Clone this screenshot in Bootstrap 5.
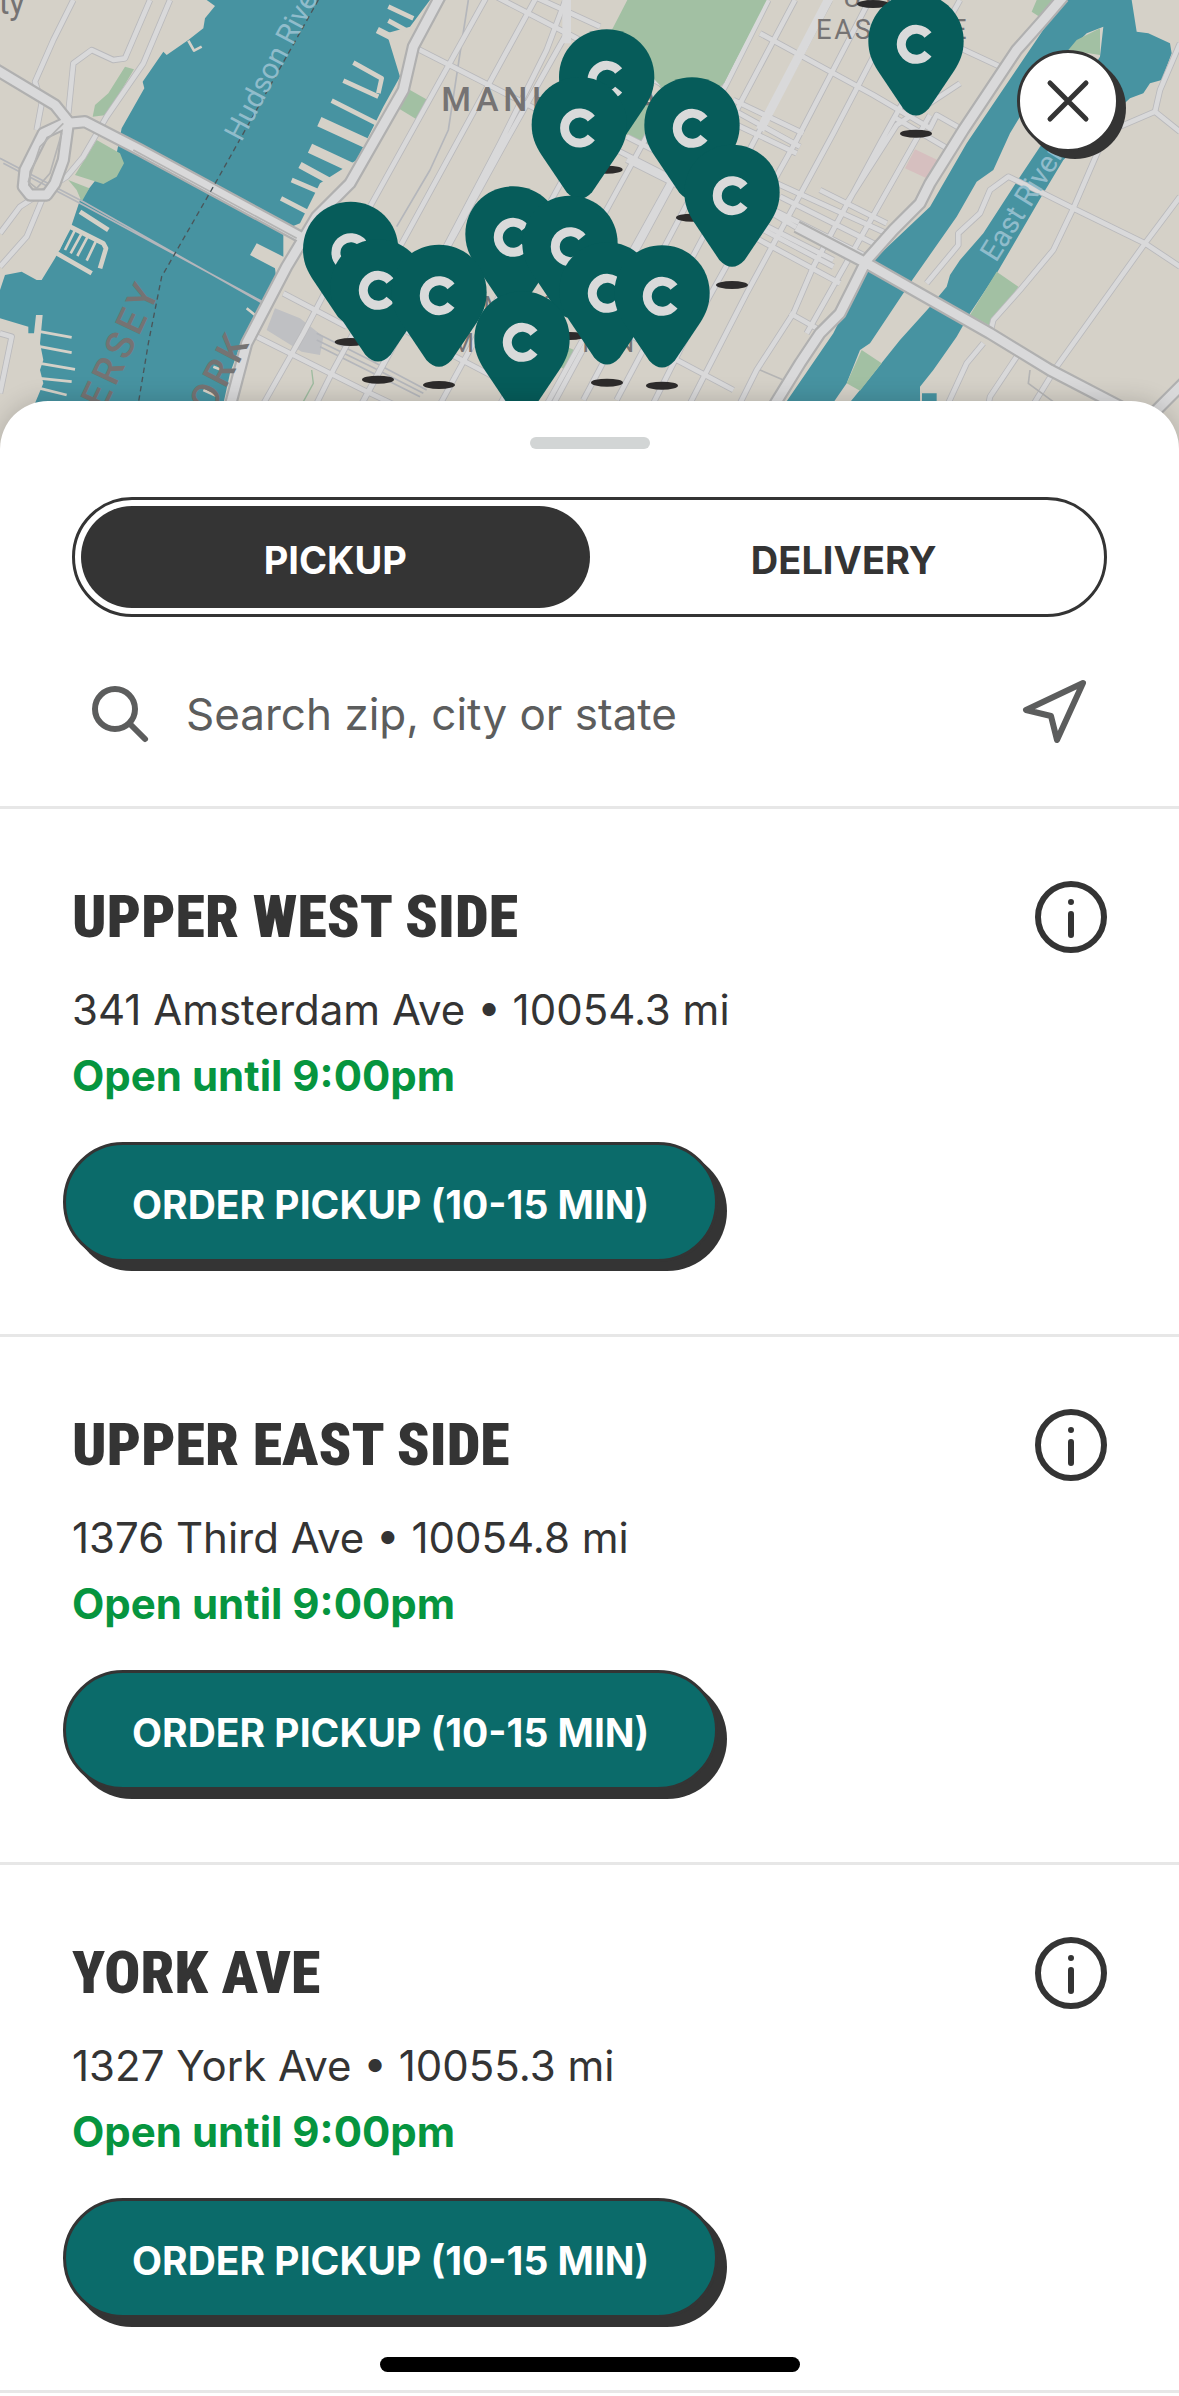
<!DOCTYPE html>
<html lang="en">
<head>
<meta charset="utf-8">
<meta name="viewport" content="width=device-width, initial-scale=1">
<title>Choose a location</title>
<link rel="stylesheet" href="https://cdn.jsdelivr.net/npm/bootstrap@5.3.0/dist/css/bootstrap.min.css">
<style>
  :root { --ink: #343434; --teal: #0b6b6a; --pin: #065c5a; --rule: #e7e7e7; }
  body { font-family: Inter, "Liberation Sans", sans-serif; color: var(--ink); background: #fff; }
  /* map */
  .map-land { background: #d5d1c8; }
  .water { fill: #4793a1; }
  .land { fill: #d5d1c8; }
  .green { fill: #a2c0a3; }
  .casing { stroke: #b9b9bc; }
  .surface { stroke: #d9d9da; }
  .streets, .highways, .piers, .rails { fill: none; stroke-linejoin: round; }
  .streets.casing { stroke-width: 19; }
  .streets.surface { stroke-width: 14; }
  .highways.casing { stroke: #b0b0b0; stroke-width: 40; }
  .highways.surface { stroke-width: 27; }
  .piers { stroke: #d5d1c8; }
  .rails { stroke: #b4b6bb; stroke-width: 5; }
  .place { fill: #757373; font-family: Roboto, sans-serif; }
  .river { fill: #90bccb; font-family: Roboto, sans-serif; font-size: 88px; }
  .pin-body { fill: var(--pin); }
  .pin-mark { fill: none; stroke: #d9dada; stroke-width: 27; }
  .pin-shade { fill: #2d2b2b; }
  .close-btn { top: 50px; right: 60px; width: 102px; height: 102px; border: 3px solid var(--ink); background: #fff; box-shadow: 7px 7px 0 var(--ink); }
  /* sheet */
  .sheet { margin-top: -49px; padding-top: 36px; border-radius: 48px 48px 0 0; box-shadow: 0 0 24px rgba(0,0,0,.18); }
  .grabber { width: 120px; height: 12px; background: #d2d5d5; }
  .gutter { padding-left: 72px; padding-right: 72px; }
  .segments { margin-top: 48px; height: 120px; padding: 6px; border: 3px solid var(--ink); }
  .segments .btn { font-size: 38px; font-weight: 700; line-height: 48px; color: var(--ink); border: 0; padding: 6px 0 0; }
  .segments .btn.active { background: var(--ink); color: #fff; }
  .search-row { height: 192px; border-bottom: 3px solid var(--rule); padding: 4px 90px 0; gap: 36px; }
  .search-row input { font-size: 44px; line-height: 60px; color: #5c5d5d; }
  .search-row input::placeholder { color: #5c5d5d; opacity: 1; }
  .search-row svg { stroke: #5c5d5d; }
  .store { padding-top: 72px; padding-bottom: 72px; border-bottom: 3px solid var(--rule); }
  .store-name { font-family: "Roboto Condensed", Roboto, sans-serif; font-size: 60px; font-weight: 900; line-height: 72px; }
  .store-line { font-size: 42px; line-height: 66px; }
  .store-open { color: #06953f; font-weight: 700; }
  .order-btn { height: 120px; margin: 33px 0 0 -9px; padding: 5px 66px 0; border: 3px solid var(--ink); background: var(--teal); color: #fff; font-size: 39px; font-weight: 700; line-height: 48px; box-shadow: 9px 9px 0 var(--ink); }
  .order-btn:hover { background: var(--pin); color: #fff; border-color: var(--ink); }
  .home-bar { bottom: 24px; width: 420px; height: 15px; background: #000; }
</style>
<script src="https://cdn.jsdelivr.net/npm/bootstrap@5.3.0/dist/js/bootstrap.bundle.min.js"></script>
</head>
<body>
<header class="position-relative map-land">
  <svg class="d-block w-100" viewBox="0 0 3537 1350" role="img" aria-label="Map of Manhattan locations">
    <defs>
      <clipPath id="island"><path d="M1290 0H3370L3270 60 3050 390 2930 600 2840 690 2700 930 2500 1230 2400 1350H660L700 1130 850 780 960 590 1150 300Z"/></clipPath>
      <g id="grid">
        <path d="M1460-10 1110 620 910 1000 740 1300M1610-10 1200 740 1000 1110 880 1350M1700-10 1640 150 1500 430 1290 830 1010 1350M1700 100 1520 420 1240 930 1010 1350M1900 150 1300 1250M2000 300 1480 1250M2080 420 1620 1250M2305 0 2180 250 1640 1250M2385 0 1750 1200M2490 0 2280 390 1850 1200M2640-60 2390 420 2050 1030 1950 1230M2740-60 2500 400 2240 880 2060 1230M2880 0 2640 430 2440 800 2380 940 2270 1110 2210 1230M2880 250 2690 375 2540 610M2790 345 2420 1000"/>
        <path d="M1240 140 2500 780M1450-30 1720 110 2000 260 2200 390M1560-30 1800 80M850 880 1040 980M770 1010 1090 1170 1300 1270M1060 910 1500 1140M1880 410 2180 560 2540 770M1880 480 2140 610 2500 800M2280 100 2620 285 2790 385 2810 345 2880 385M2200 300 2410 400M2200 330 2400 440M2200 370 2390 460M2850 130 3000 200M2330 550 2660 700M2340 590 2640 740M2300 620 2600 770M2460 570 2660 670M2260 710 2520 850M2370 940 2450 985M2680 350 2850 450M1880 1000 2200 1170M930 1240 1100 1330"/>
      </g>
      <g id="outer">
        <path d="M220 0 160 120 105 245 125 310 110 390M450 0 375 175 340 180 275 150 220 190 205 340M510 0 430 190 320 350 250 470 200 530 60 620 0 700M130 590 80 710 0 800M0 1000 35 1010 0 1180"/>
        <path d="M2780 850 2875 735 2875 700 2940 640 2970 570 3025 530 3130 580 3220 625 3435 730 3540 800M3360 380 3465 335 3480 270 3540 130M3465 335 3540 395M3300 440 3220 625 3160 750 3060 870 2980 960 2970 1000M3540 590 3435 730 3170 1100 3090 1230M2950 1030 2900 1090 2840 1220M3050 1070 2970 1190 2960 1240"/>
      </g>
      <g id="fast">
        <path d="M-10 210 165 315 205 365 130 400 75 510 70 560 90 585 140 585 165 550 190 480 205 370 255 365 420 450 900 710 960 750M1320-10 1240 140 1210 270 1050 550 950 650 860 800 740 1030 690 1220"/>
        <path d="M3190-10 3130 60 3050 150 2970 270 2890 390 2790 550 2760 610 2680 690 2600 780 2560 860 2520 940 2460 1000 2400 1090 2320 1220M2390 680 2600 790 2970 1000 3150 1110 3400 1240M3560 1140 3440 1260"/>
      </g>
      <g id="pin">
        <ellipse class="pin-shade" cy="268" rx="48" ry="12"/>
        <path class="pin-body" d="M0-153C80-153 143-90 143-10 143 26 132 52 114 80L38 193Q0 234-38 193L-114 80C-132 52-143 26-143-10-143-90-80-153 0-153Z"/>
        <path class="pin-mark" d="M36-28A45 45 0 1 0 36 28"/>
      </g>
    </defs>

    <path class="water" d="M620 0 645 18 615 55 610 85 565 120 500 165 490 155 428 245 433 265 365 385 350 460 240 600 210 690 165 775 125 840 110 840 65 815 15 825 0 870V955L85 980V1000H102L108 945H128L120 1030 130 1080 120 1110 130 1150 105 1210V1350H640L690 1120 730 1010 785 905 828 830 825 805 750 765 770 730 850 770 850 690 900 670 960 550 1070 480 1150 320 1200 230 1160 100 1230 80 1290 0Z"/>
    <path class="water" d="M3190 0H3395L3410 95 3445 100 3510 130 3515 160 3500 200 3485 240 3450 250 3430 280 3390 295 3190 480 3130 580 2990 820 2910 940 2870 1010 2800 1110 2760 1160V1350H2260L2500 1000 2600 800 2790 620 2900 430Z"/>
    <path class="land" d="M3310 80 3260 100 3210 150 3060 350 3030 400 2980 510 2930 545 2870 650 2800 750 2730 850 2610 1030 2580 1050 2540 1150 2450 1280H2490L2580 1170 2700 1020 2790 920 2840 860 2850 825 2880 780 2950 700 3060 530 3300 170Z"/>
    <path class="water" d="M2256 0H2292L2275 35 2256 35ZM2766 1180H2810V1220H2766Z"/>
    <g class="piers">
      <path stroke-width="14" d="M1165 20 1240 55M1165 62 1235 100M1060 188 1145 235 1135 280M1030 242 1135 290M995 302 1130 370M875 540 980 585M843 595 930 640M240 635 325 690M210 680 310 730 318 745 300 805M170 760 275 820"/>
      <path stroke-width="20" d="M1132 90 1210 130M900 495 1010 555"/>
      <path stroke-width="30" d="M958 365 1100 430M930 445 1070 510"/>
      <path stroke-width="8" d="M205 685 175 750M225 690 195 750M245 700 212 760M263 710 232 768M287 725 260 782M120 995 215 1012M120 1040 215 1058M120 1090 225 1108M120 1135 215 1145M120 1165 200 1185M565 122 582 152 605 140M640 1100 665 1110M610 1170 655 1190M740 925 765 945"/>
    </g>
    <path class="green" d="M375 200 402 208 320 345 278 350 285 315 325 280ZM290 420 360 460 372 490 350 530 310 552 225 525ZM205 540 268 565 245 605 230 570ZM1230 270 1283 300 1253 360 1195 325ZM1882 0H2305L2180 250 2030 320 1960 240 1815 130ZM1920 310 2000 330 1950 440 1870 400ZM1700 1040 1745 1060 1705 1115 1680 1100ZM3110 0H3160L3125 55 3095 35ZM3205 150 3230 120 3300 85V165ZM2990 815 3055 860 2975 980 2910 945ZM2585 1050 2645 1090 2580 1172 2540 1150Z"/>
    <path fill="#d6bfbf" d="M2745 448 2812 480 2780 535 2715 505Z"/>
    <path fill="#bfc0c3" d="M825 925 900 955 970 1010 960 1065 905 1055 800 990Z"/>
    <path class="rails" d="M950 1000 1110 1080 1280 1170M950 1020 1110 1098 1270 1180M960 1040 1100 1110 1260 1190"/>
    <path class="rails" d="M1405 0 1380 160 1345 390 1290 510 1190 680M0 475 250 605 785 908M10 490 250 615 785 904"/>
    <path fill="none" stroke="#9dbb9f" stroke-width="4" d="M935 1110 940 1150 910 1205"/>

    <use href="#outer" class="streets casing"/>
    <use href="#outer" class="streets surface"/>
    <g clip-path="url(#island)">
      <use href="#grid" class="streets casing"/>
      <use href="#grid" class="streets surface"/>
    </g>
    <path fill="none" stroke="#d9d9da" stroke-width="26" d="M1700-10V130M2495-20 2280 390"/>
    <path class="green" d="M1886 0H2300L2172 250 2030 310 1965 240 1822 130Z"/>
    <use href="#fast" class="highways casing"/>
    <use href="#fast" class="highways surface"/>
    <path fill="none" stroke="#b4b4b4" stroke-width="5" d="M190 370 120 440 85 545 110 565 150 520 185 400M400 450 890 715M3090 1110 3085 1150 3180 1220M2280 1110 2350 1140"/>
    <path fill="none" stroke="#4a5559" stroke-width="4" stroke-dasharray="16 12" d="M955 0 640 560 485 830 445 1030 415 1210"/>

    <g class="place">
      <text x="-4" y="42" font-size="98">ty</text>
      <text x="1324" y="332" font-size="102" letter-spacing="14" font-weight="500">MANHATTAN</text>
      <text x="1450" y="945" font-size="80" letter-spacing="14">MIDTOWN</text>
      <text x="1352" y="1057" font-size="80" letter-spacing="8">MANHATTAN</text>
      <text x="2530" y="20" font-size="82" letter-spacing="10">UPPER</text>
      <text x="2448" y="118" font-size="82" letter-spacing="8">EAST SIDE</text>
      <text transform="translate(484 865) rotate(-65)" text-anchor="end" font-size="116" letter-spacing="12" font-weight="500">JERSEY</text>
      <text transform="translate(752 1025) rotate(-62)" text-anchor="end" font-size="116" letter-spacing="8" font-weight="500">YORK</text>
    </g>
    <g class="river">
      <text transform="translate(724 428) rotate(-62)">Hudson River</text>
      <text transform="translate(2988 790) rotate(-58)">East River</text>
    </g>

    <ellipse class="pin-shade" cx="2619" cy="12" rx="48" ry="12"/>
    <use href="#pin" x="2748" y="133"/>
    <use href="#pin" x="1820" y="241"/>
    <use href="#pin" x="1738" y="384"/>
    <use href="#pin" x="2076" y="385"/>
    <use href="#pin" x="2196" y="587"/>
    <use href="#pin" x="1539" y="712"/>
    <use href="#pin" x="1710" y="740"/>
    <use href="#pin" x="1052" y="758"/>
    <use href="#pin" x="1134" y="871"/>
    <use href="#pin" x="1821" y="880"/>
    <use href="#pin" x="1317" y="887"/>
    <use href="#pin" x="1986" y="889"/>
    <use href="#pin" x="1566" y="1027"/>
  </svg>
  <button type="button" class="close-btn position-absolute rounded-circle d-flex align-items-center justify-content-center p-0" aria-label="Close">
    <svg width="44" height="44" viewBox="0 0 44 44" fill="none" stroke="#343434" stroke-width="5" stroke-linecap="round"><path d="M4 4 40 40M40 4 4 40"/></svg>
  </button>
</header>

<main class="sheet position-relative bg-white">
  <div class="grabber rounded-pill mx-auto"></div>
  <div class="gutter">
    <div class="segments d-flex rounded-pill" role="group" aria-label="Order type">
      <button type="button" class="btn active rounded-pill flex-fill w-50" aria-pressed="true">PICKUP</button>
      <button type="button" class="btn rounded-pill flex-fill w-50" aria-pressed="false">DELIVERY</button>
    </div>
  </div>
  <form class="search-row d-flex align-items-center">
    <label for="place-search" class="d-flex"><span class="visually-hidden">Search</span>
      <svg width="60" height="60" viewBox="0 0 60 60" fill="none" stroke-width="6" stroke-linecap="round"><circle cx="25" cy="25" r="20"/><path d="M40 40 55 55"/></svg>
    </label>
    <input id="place-search" type="text" class="form-control border-0 shadow-none p-0 bg-transparent" placeholder="Search zip, city or state">
    <button type="button" class="btn border-0 p-0 d-flex" aria-label="Use my location">
      <svg width="70" height="70" viewBox="0 0 70 70" fill="none" stroke-width="6" stroke-linejoin="round"><path d="M64 4 7 31 32 37 38 61Z"/></svg>
    </button>
  </form>

  <section class="store gutter">
    <div class="d-flex justify-content-between mb-4">
      <h2 class="store-name mb-0">UPPER WEST SIDE</h2>
      <button type="button" class="btn border-0 p-0 d-flex" aria-label="Upper West Side details">
        <svg width="72" height="72" viewBox="0 0 72 72" fill="none" stroke="#343434" stroke-width="6" stroke-linecap="round"><circle cx="36" cy="36" r="33"/><path d="M36 21v0M36 33v21"/></svg>
      </button>
    </div>
    <p class="store-line mb-0">341 Amsterdam Ave • 10054.3 mi</p>
    <p class="store-line store-open mb-0">Open until 9:00pm</p>
    <button type="button" class="btn order-btn rounded-pill">ORDER PICKUP (10-15 MIN)</button>
  </section>

  <section class="store gutter">
    <div class="d-flex justify-content-between mb-4">
      <h2 class="store-name mb-0">UPPER EAST SIDE</h2>
      <button type="button" class="btn border-0 p-0 d-flex" aria-label="Upper East Side details">
        <svg width="72" height="72" viewBox="0 0 72 72" fill="none" stroke="#343434" stroke-width="6" stroke-linecap="round"><circle cx="36" cy="36" r="33"/><path d="M36 21v0M36 33v21"/></svg>
      </button>
    </div>
    <p class="store-line mb-0">1376 Third Ave • 10054.8 mi</p>
    <p class="store-line store-open mb-0">Open until 9:00pm</p>
    <button type="button" class="btn order-btn rounded-pill">ORDER PICKUP (10-15 MIN)</button>
  </section>

  <section class="store gutter">
    <div class="d-flex justify-content-between mb-4">
      <h2 class="store-name mb-0">YORK AVE</h2>
      <button type="button" class="btn border-0 p-0 d-flex" aria-label="York Ave details">
        <svg width="72" height="72" viewBox="0 0 72 72" fill="none" stroke="#343434" stroke-width="6" stroke-linecap="round"><circle cx="36" cy="36" r="33"/><path d="M36 21v0M36 33v21"/></svg>
      </button>
    </div>
    <p class="store-line mb-0">1327 York Ave • 10055.3 mi</p>
    <p class="store-line store-open mb-0">Open until 9:00pm</p>
    <button type="button" class="btn order-btn rounded-pill">ORDER PICKUP (10-15 MIN)</button>
  </section>
</main>
<div class="home-bar position-fixed start-50 translate-middle-x rounded-pill"></div>
</body>
</html>
